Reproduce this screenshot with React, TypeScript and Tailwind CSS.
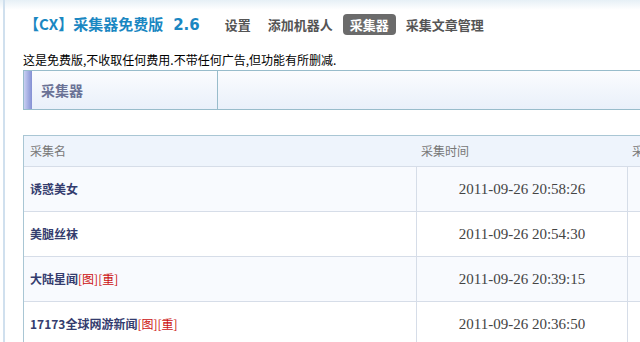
import React from "react";

const cjk = '"Noto Sans CJK SC", "DejaVu Sans", sans-serif';

const rows = [
  { name: "诱惑美女", time: "2011-09-26 20:58:26", tags: false },
  { name: "美腿丝袜", time: "2011-09-26 20:54:30", tags: false },
  { name: "大陆星闻", time: "2011-09-26 20:39:15", tags: true },
  { name: "17173全球网游新闻", time: "2011-09-26 20:36:50", tags: true },
];

export default function App() {
  return (
    <div className="relative h-[342px] w-[640px] overflow-hidden bg-white" style={{ fontFamily: cjk }}>
      <div className="absolute left-0 top-0 h-[10px] w-full bg-gradient-to-b from-[#e6f0f6] to-white" />
      <div className="relative ml-[3px] h-full border-l-2 border-[#d0e0ee] pl-[18px]">
        {/* title + nav */}
        <div className="flex h-[50px] items-center pb-[2px] pt-[1px]">
          <div className="ml-[1px] text-[15px] font-bold text-[#1a87c2] whitespace-nowrap">
            【CX】采集器免费版<span className="ml-[10px]" style={{ fontFamily: '"DejaVu Sans", sans-serif' }}>2.6</span>
          </div>
          <nav className="ml-[23px] flex items-center text-[13px] font-bold text-[#555]">
            <span className="px-[2px]">设置</span>
            <span className="ml-[15px]">添加机器人</span>
            <span className="ml-[10px] rounded-[4px] bg-[#6b6b6b] px-[7px] py-[1px] text-white">采集器</span>
            <span className="ml-[10px]">采集文章管理</span>
          </nav>
        </div>
        {/* intro */}
        <div className="h-[20px] text-[12px] leading-[20px] text-black whitespace-nowrap">
          这是免费版,不收取任何费用.不带任何广告,但功能有所删减.
        </div>
        {/* header box */}
        <div className="flex h-[40px] w-[900px] border border-[#98bccb] bg-gradient-to-b from-[#fbfcfe] to-[#e9f0fa]">
          <div className="flex w-[194px] items-stretch border-r border-[#98bccb]">
            <div className="w-[8px] bg-gradient-to-r from-[#c9cff2] to-[#8490d3]" />
            <div className="ml-[9px] flex items-center text-[14px] font-bold text-[#6a7296]">采集器</div>
          </div>
          <div className="flex-1" />
        </div>
        {/* table */}
        <div className="mt-[25px] w-[900px] border-l border-t border-[#a9c6d4]">
          <div className="flex h-[31px] items-center border-b border-[#d6dde8] bg-[#eef4fc] text-[12px] text-[#777]">
            <div className="w-[392px] pl-[6px]">采集名</div>
            <div className="w-[211px] pl-[5px]">采集时间</div>
            <div className="pl-[5px]">采集</div>
          </div>
          {rows.map((r, i) => (
            <div
              key={i}
              className={`flex h-[45px] items-stretch border-b border-[#d6dde8] ${i % 2 === 0 ? "bg-[#f8fafe]" : "bg-white"}`}
            >
              <div className="flex w-[392px] items-center pl-[6px] text-[12px] whitespace-nowrap">
                <span className="font-bold text-[#343c6e]">{r.name}</span>
                {r.tags && <span className="text-[#cc1111]">[图][重]</span>}
              </div>
              <div
                className="flex w-[211px] items-center justify-center border-l border-[#d6dde8] text-[15px] text-[#444]"
                style={{ fontFamily: '"Liberation Serif", "DejaVu Serif", serif' }}
              >
                {r.time}
              </div>
              <div className="flex-1 border-l border-[#d6dde8]" />
            </div>
          ))}
        </div>
      </div>
    </div>
  );
}
